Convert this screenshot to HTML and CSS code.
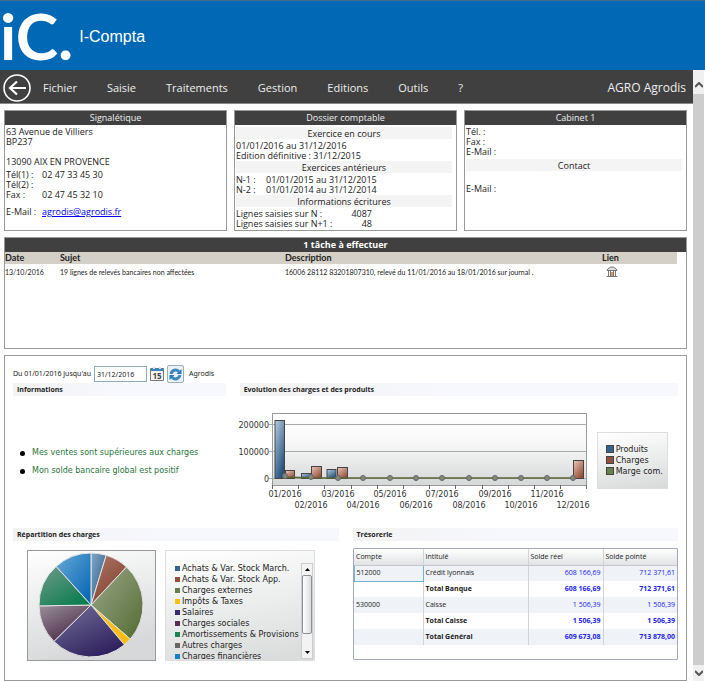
FILE: index.html
```html
<!DOCTYPE html>
<html lang="fr">
<head>
	<meta charset="utf-8">
	<title>I-Compta</title>
	<link rel="stylesheet" href="styles.css">
</head>
<body>
	<header class="banner">
		<span class="logo">iC.</span>
		<h1>I-Compta</h1>
	</header>
	<div class="page">
		<div class="content">
			<nav class="menu">
				<button class="back" aria-label="Retour">
					<svg width="28" height="28" viewBox="0 0 28 28" fill="none" stroke="#fff">
						<circle cx="14" cy="14" r="13" stroke-width="1.6"/>
						<path d="M23 14H7M14 7.5L7 14l7 6.5" stroke-width="2.2"/>
					</svg>
				</button>
				<a href="#">Fichier</a>
				<a href="#">Saisie</a>
				<a href="#">Traitements</a>
				<a href="#">Gestion</a>
				<a href="#">Editions</a>
				<a href="#">Outils</a>
				<a href="#">?</a>
				<span class="company">AGRO Agrodis</span>
			</nav>

			<main>
				<div class="cards">
					<section class="card">
						<h2>Signalétique</h2>
						<div class="card-body">
							<p>63 Avenue de Villiers<br>BP237<br><br>13090 AIX EN PROVENCE</p>
							<dl class="tel">
								<dt>Tél(1) :</dt><dd>02 47 33 45 30</dd>
								<dt>Tél(2) :</dt><dd></dd>
								<dt>Fax :</dt><dd>02 47 45 32 10</dd>
							</dl>
							<dl class="tel mail">
								<dt>E-Mail :</dt><dd><a href="mailto:agrodis@agrodis.fr">agrodis@agrodis.fr</a></dd>
							</dl>
						</div>
					</section>

					<section class="card">
						<h2>Dossier comptable</h2>
						<div class="card-body">
							<h3>Exercice en cours</h3>
							<p>01/01/2016 au 31/12/2016<br>Edition définitive : 31/12/2015</p>
							<h3>Exercices antérieurs</h3>
							<dl class="years">
								<dt>N-1 :</dt><dd>01/01/2015 au 31/12/2015</dd>
								<dt>N-2 :</dt><dd>01/01/2014 au 31/12/2014</dd>
							</dl>
							<h3>Informations écritures</h3>
							<dl class="lines">
								<dt>Lignes saisies sur N :</dt><dd>4087</dd>
								<dt>Lignes saisies sur N+1 :</dt><dd>48</dd>
							</dl>
						</div>
					</section>

					<section class="card">
						<h2>Cabinet 1</h2>
						<div class="card-body">
							<p>Tél. :<br>Fax :<br>E-Mail :</p>
							<h3 class="contact">Contact</h3>
							<p>E-Mail :</p>
						</div>
					</section>
				</div>

				<section class="card tasks">
					<h2>1 tâche à effectuer</h2>
					<table>
						<thead>
							<tr>
								<th class="c-date">Date</th>
								<th class="c-subject">Sujet</th>
								<th class="c-desc">Description</th>
								<th>Lien</th>
							</tr>
						</thead>
						<tbody>
							<tr>
								<td>13/10/2016</td>
								<td>19 lignes de relevés bancaires non affectées</td>
								<td>16006 28112 83201807310, relevé du 11/01/2016 au 18/01/2016 sur journal .</td>
								<td>
									<a href="#" class="bank" aria-label="Banque">
										<svg width="12" height="12" viewBox="0 0 12 12" fill="none" stroke="#777">
											<path d="M1 4.5C2 2 4 1 6 1s4 1 5 3.500zM2.500 5v5M4.500 5v5M7.500 5v5M9.500 5v5M0.500 10.500h11" fill="#ddd"/>
											<path d="M6 6v4" stroke="#d99a55" stroke-width="2"/>
										</svg>
									</a>
								</td>
							</tr>
						</tbody>
					</table>
				</section>

				<section class="dashboard">
					<form class="period">
						<label for="until">Du 01/01/2016 jusqu'au</label>
						<input type="text" id="until" value="31/12/2016">
						<button type="button" class="calendar" aria-label="Calendrier">
							<svg width="14" height="14" viewBox="0 0 14 14">
								<path d="M.5 1.500h13v12H.5z" fill="#f4f4f4" stroke="#777"/>
								<path d="M1 1h12v3H1z" fill="#3c86b8"/>
								<path d="M3 0h2v2H3zM9 0h2v2H9z" fill="#ddd"/>
								<text x="7" y="12" text-anchor="middle">15</text>
							</svg>
						</button>
						<button type="button" class="refresh" aria-label="Actualiser">
							<svg width="13" height="13" viewBox="0 0 13 13" fill="none" stroke="#3c88c2" stroke-width="3">
								<path d="M2 6C3 2 7 1 10 3.500M11 7c-1 4-5 5-8 2.500"/>
								<path d="M12.500 1v5h-5zM.5 12V7h5z" fill="#2c79b8" stroke="none"/>
							</svg>
						</button>
						<span>Agrodis</span>
					</form>

					<div class="row top">
						<section>
							<h3>Informations</h3>
							<ul class="infos">
								<li>Mes ventes sont supérieures aux charges</li>
								<li>Mon solde bancaire global est positif</li>
							</ul>
						</section>
						<section>
							<h3>Evolution des charges et des produits</h3>
							<div class="evolution">
								<svg class="chart" width="360" height="104" viewBox="-4 0 360 104">
									<defs>
										<linearGradient id="plot" x2="0" y2="1"><stop stop-color="#fff"/><stop offset=".4" stop-color="#f8f8f8"/><stop offset="1" stop-color="#d5d8d8"/></linearGradient>
										<linearGradient id="blue" x2=".6" y2="1"><stop stop-color="#b5cde0"/><stop offset="1" stop-color="#24527c"/></linearGradient>
										<linearGradient id="red" x2=".7" y2="1"><stop stop-color="#eac8ba"/><stop offset="1" stop-color="#954b35"/></linearGradient>
									</defs>
									<rect x="32.500" y="5.500" width="314" height="72" fill="url(#plot)" stroke="#999"/>
									<path d="M29 16.500h318M29 43.500h318M29 70.500h318" stroke="#aaa"/>
									<path d="M32.500 77v4M58.500 77v4M84.500 77v4M111.500 77v4M137.500 77v4M163.500 77v4M189.500 77v4M215.500 77v4M242.500 77v4M268.500 77v4M294.500 77v4M320.500 77v4M346.500 77v4" stroke="#666"/>
									<g fill="url(#blue)" stroke="#444">
										<rect x="35" y="12.500" width="9.500" height="58"/>
										<rect x="61.500" y="65.500" width="9" height="5"/>
										<rect x="87" y="61.500" width="9" height="9"/>
									</g>
									<g fill="url(#red)" stroke="#444">
										<rect x="45.500" y="62.500" width="9" height="8"/>
										<rect x="71.500" y="58.500" width="10" height="12"/>
										<rect x="97.500" y="59.500" width="10" height="11"/>
										<rect x="333.500" y="52.500" width="10" height="18"/>
									</g>
									<path d="M46 69l26 1h262" fill="none" stroke="#5a6436" stroke-width="1.500"/>
									<g fill="#858878" stroke="#666">
										<circle cx="45" cy="68" r="2.500"/><circle cx="71" cy="69" r="2.500"/><circle cx="98" cy="70" r="2.500"/><circle cx="123" cy="70" r="2.500"/><circle cx="150" cy="70" r="2.500"/><circle cx="176" cy="70" r="2.500"/>
										<circle cx="202" cy="70" r="2.500"/><circle cx="229" cy="70" r="2.500"/><circle cx="255" cy="70" r="2.500"/><circle cx="281" cy="70" r="2.500"/><circle cx="307" cy="70" r="2.500"/><circle cx="333" cy="70" r="2.500"/>
									</g>
									<g text-anchor="end">
										<text x="29" y="20">200000</text><text x="29" y="47">100000</text><text x="29" y="74">0</text>
									</g>
									<g text-anchor="middle">
										<text x="45" y="89">01/2016</text><text x="98" y="89">03/2016</text><text x="150" y="89">05/2016</text><text x="202" y="89">07/2016</text><text x="255" y="89">09/2016</text><text x="307" y="89">11/2016</text>
										<text x="71" y="100">02/2016</text><text x="123" y="100">04/2016</text><text x="176" y="100">06/2016</text><text x="229" y="100">08/2016</text><text x="281" y="100">10/2016</text><text x="333" y="100">12/2016</text>
									</g>
								</svg>
								<ul class="legend">
									<li class="navy">Produits</li>
									<li class="brown">Charges</li>
									<li class="olive">Marge com.</li>
								</ul>
							</div>
						</section>
					</div>

					<div class="row bottom">
						<section>
							<h3>Répartition des charges</h3>
							<div class="split">
								<svg class="pie" width="129" height="111" viewBox="0 0 129 111">
									<defs>
										<linearGradient id="back" x2=".3" y2="1"><stop stop-color="#fff"/><stop offset="1" stop-color="#d6d8d9"/></linearGradient>
										<linearGradient id="p1" x2="1" y2="1"><stop stop-color="#82aacc"/><stop offset="1" stop-color="#254f78"/></linearGradient>
										<linearGradient id="p2" x2=".6" y2="1"><stop stop-color="#ad7868"/><stop offset="1" stop-color="#84402e"/></linearGradient>
										<linearGradient id="p3" x2="1" y2="1"><stop stop-color="#9ca88b"/><stop offset="1" stop-color="#536b32"/></linearGradient>
										<linearGradient id="p5" x2=".6" y2="1"><stop stop-color="#74729a"/><stop offset="1" stop-color="#30225f"/></linearGradient>
										<linearGradient id="p6" x2=".7" y2="1"><stop stop-color="#9b929b"/><stop offset="1" stop-color="#462344"/></linearGradient>
										<linearGradient id="p7" x2=".8" y2="1"><stop stop-color="#719a8b"/><stop offset="1" stop-color="#087c4d"/></linearGradient>
										<linearGradient id="p8" x2="1" y2="1"><stop stop-color="#67a9d8"/><stop offset="1" stop-color="#0062b0"/></linearGradient>
									</defs>
									<rect x=".5" y=".5" width="128" height="110" fill="url(#back)" stroke="#999"/>
									<g stroke="#e4e4e4">
										<path d="M64 55V3A52 52 0 0 1 79.200 5.300z" fill="url(#p1)"/>
										<path d="M64 55L79.200 5.300A52 52 0 0 1 99.500 17z" fill="url(#p2)"/>
										<path d="M64 55L99.500 17A52 52 0 0 1 103.300 89.100z" fill="url(#p3)"/>
										<path d="M64 55L103.300 89.100A52 52 0 0 1 97.400 94.800z" fill="#fcbd16"/>
										<path d="M64 55L97.400 94.800A52 52 0 0 1 26.900 91.400z" fill="url(#p5)"/>
										<path d="M64 55L26.900 91.400A52 52 0 0 1 12 55.900z" fill="url(#p6)"/>
										<path d="M64 55L12 55.900A52 52 0 0 1 29.200 16.400z" fill="url(#p7)"/>
										<path d="M64 55L29.200 16.400A52 52 0 0 1 64 3z" fill="url(#p8)"/>
									</g>
								</svg>
								<div class="legend-box">
									<ul class="legend">
										<li class="navy">Achats &amp; Var. Stock March.</li>
										<li class="brown">Achats &amp; Var. Stock App.</li>
										<li class="olive">Charges externes</li>
										<li class="yellow">Impôts &amp; Taxes</li>
										<li class="purple">Salaires</li>
										<li class="plum">Charges sociales</li>
										<li class="green">Amortissements &amp; Provisions</li>
										<li class="grey">Autres charges</li>
										<li class="blue">Charges financières</li>
									</ul>
									<div class="mini-scroll">
										<button aria-label="Monter"><svg width="5" height="3" viewBox="0 0 5 3"><path d="M0 3L2.500 0 5 3z"/></svg></button>
										<div class="mini-thumb"></div>
										<button aria-label="Descendre"><svg width="5" height="3" viewBox="0 0 5 3"><path d="M0 0h5L2.500 3z"/></svg></button>
									</div>
								</div>
							</div>
						</section>
						<section>
							<h3>Trésorerie</h3>
							<div class="treasury">
								<table>
									<thead>
										<tr><th class="c-account">Compte</th><th class="c-title">Intitulé</th><th class="c-real">Solde réel</th><th>Solde pointé</th></tr>
									</thead>
									<tbody>
										<tr><td class="selected">512000</td><td>Crédit lyonnais</td><td>608 166,69</td><td>712 371,61</td></tr>
										<tr class="total"><td></td><td>Total Banque</td><td>608 166,69</td><td>712 371,61</td></tr>
										<tr><td>530000</td><td>Caisse</td><td>1 506,39</td><td>1 506,39</td></tr>
										<tr class="total"><td></td><td>Total Caisse</td><td>1 506,39</td><td>1 506,39</td></tr>
										<tr class="total"><td></td><td>Total Général</td><td>609 673,08</td><td>713 878,00</td></tr>
									</tbody>
								</table>
							</div>
						</section>
					</div>
				</section>
			</main>
		</div>

		<div class="scrollbar">
			<button aria-label="Haut"><svg width="8" height="6" viewBox="0 0 8 6"><path d="M0 5l4-4 4 4" fill="none" stroke="#555" stroke-width="2"/></svg></button>
			<div class="thumb"></div>
			<button aria-label="Bas"><svg width="8" height="6" viewBox="0 0 8 6"><path d="M0 1l4 4 4-4" fill="none" stroke="#555" stroke-width="2"/></svg></button>
		</div>
	</div>
</body>
</html>
```
FILE: styles.css
```css
*{
	box-sizing: border-box;
}
body{
	margin: 0;
	min-height: 100vh;
	display: flex;
	flex-direction: column;
	background: #fff;
	color: #222;
	font-family: "Open Sans", "Noto Sans", sans-serif;
	font-size: 9px;
	line-height: 10px;
}
h1,h2,h3,p,ul,dl,dd{
	margin: 0;
	padding: 0;
	font-weight: normal;
}
button{
	padding: 0;
	border: none;
	background: none;
	display: flex;
	align-items: center;
	justify-content: center;
}
svg{
	display: block;
}
table{
	border-collapse: collapse;
	table-layout: fixed;
	width: 100%;
}
th,td{
	padding: 0;
	text-align: left;
}

/* banner and menu */
.banner{
	height: 70px;
	display: flex;
	align-items: center;
	gap: 6px;
	background: #0068b4;
	border-top: 1px solid #446b8c;
	color: #fff;
}
.logo{
	font: bold 64px/69px Lato, sans-serif;
}
.banner h1{
	padding-top: 2px;
	font: 16px/20px "Liberation Sans", sans-serif;
}
.page{
	flex: 1;
	display: flex;
}
.content{
	flex: 1;
	min-width: 0;
	display: flex;
	flex-direction: column;
}
.menu{
	height: 34px;
	display: flex;
	align-items: center;
	gap: 30px;
	padding: 2px 7px 0 3px;
	background: #404040;
	border-bottom: 1px solid #888;
	font-size: 11px;
}
.menu a{
	color: #eee;
	text-decoration: none;
}
.back{
	margin-right: -18px;
}
.company{
	margin-left: auto;
	color: #eee;
	font-size: 12px;
}
main{
	flex: 1;
	display: flex;
	flex-direction: column;
	gap: 6px;
	padding: 6px 6px 0 4px;
}

/* cards */
.cards{
	display: grid;
	grid-template-columns: repeat(3, 1fr);
	gap: 7px;
}
.card{
	min-height: 121px;
	border: 1px solid #999;
}
.card h2{
	height: 14px;
	background: #404040;
	color: #eee;
	font-size: 9px;
	line-height: 14px;
	text-align: center;
}
.card-body{
	padding: 2px 4px 0 1px;
}
.card-body h3{
	height: 12px;
	background: #f4f4f4;
	font-size: 9px;
	line-height: 14px;
	text-align: center;
	margin-bottom: 2px;
}
.card-body dl{
	display: grid;
	grid-auto-rows: 10px;
	white-space: nowrap;
}
.tel{
	grid-template-columns: 36px 1fr;
	margin-top: 3px;
}
.mail{
	padding-top: 4px;
}
.tel a{
	color: #0000ee;
}
.years{
	grid-template-columns: 30px 1fr;
}
.lines{
	grid-template-columns: 102px 34px;
}
.lines dd{
	text-align: right;
}
.card-body .contact{
	margin: 2px 0 13px;
}

/* tasks */
.tasks{
	min-height: 112px;
}
.tasks h2{
	font-weight: bold;
	color: #fff;
}
.tasks table{
	width: calc(100% - 9px);
	font-family: Lato, "Open Sans", sans-serif;
}
.tasks th{
	height: 12px;
	background: #d4d0c8;
	font-size: 9px;
	line-height: 12px;
}
.tasks td{
	height: 16px;
	font-size: 7px;
	white-space: nowrap;
}
.c-date{
	width: 55px;
}
.c-subject{
	width: 225px;
}
.c-desc{
	width: 317px;
}
.bank{
	display: block;
	padding-left: 4px;
}

/* dashboard */
.dashboard{
	flex: 1;
	padding: 9px 8px 8px;
	border: 1px solid #999;
}
.period{
	height: 18px;
	display: flex;
	align-items: center;
	gap: 3px;
	font-family: "Noto Sans", sans-serif;
	font-size: 7px;
}
.period input{
	width: 53px;
	height: 16px;
	padding: 0 2px;
	border: 1px solid #8fa9bd;
	font: 7px "Noto Sans", sans-serif;
	color: #222;
}
.calendar text{
	font: bold 8px "Open Sans", sans-serif;
	fill: #444;
}
.refresh{
	width: 17px;
	height: 18px;
	margin-right: 2px;
	border: 1px solid #9aaebb;
	border-radius: 2px;
	background: #edf2f6;
}
.row{
	display: grid;
	gap: 14px;
}
.top{
	grid-template-columns: 213fr 439fr;
	min-height: 145px;
}
.bottom{
	grid-template-columns: 1fr 1fr;
}
.dashboard h3{
	height: 13px;
	padding-left: 4px;
	background: linear-gradient(to right, #f3f3f3, #f7f8fe 50%);
	font-size: 7px;
	line-height: 13px;
	font-weight: bold;
}
.infos{
	padding: 52px 0 0 7px;
	list-style: none;
	font: 8px/10px "DejaVu Sans", sans-serif;
	color: #28753a;
}
.infos li{
	display: flex;
	align-items: center;
	gap: 7px;
	margin-bottom: 8px;
	white-space: nowrap;
}
.infos li::before{
	content: "";
	width: 5px;
	height: 5px;
	border-radius: 50%;
	background: #000;
}
.evolution{
	display: flex;
	align-items: center;
	gap: 1px;
	margin-left: -4px;
	padding-top: 12px;
}
.chart text{
	font: 8px "DejaVu Sans", sans-serif;
	fill: #333;
}
.legend{
	list-style: none;
	font: 8px/11px "DejaVu Sans", sans-serif;
}
.legend li{
	display: flex;
	align-items: center;
	gap: 2px;
	white-space: nowrap;
}
.legend li::before{
	content: "";
	flex: none;
	width: 5px;
	height: 5px;
}
.evolution .legend{
	width: 71px;
	padding: 11px 8px;
	border: 1px solid #ddd;
	background: linear-gradient(170deg, #fff, #d8dada);
}
.evolution .legend li::before{
	border: 1px solid #444;
	width: 6px;
	height: 6px;
}
.navy::before{
	background: #32658f;
}
.brown::before{
	background: #93503e;
}
.olive::before{
	background: #68814b;
}
.yellow::before{
	background: #fcbd16;
}
.purple::before{
	background: #3b2c72;
}
.plum::before{
	background: #562f55;
}
.green::before{
	background: #198557;
}
.grey::before{
	background: #666;
}
.blue::before{
	background: #1680c8;
}
.split{
	display: flex;
	gap: 9px;
	padding: 9px 0 0 14px;
}
.legend-box{
	width: 150px;
	height: 111px;
	display: flex;
	justify-content: space-between;
	padding: 12px 1px 1px 9px;
	border: 1px solid #ddd;
	background: linear-gradient(170deg, #fff, #d8dada);
}
.legend-box .legend{
	height: 96px;
	overflow: hidden;
}
.mini-scroll{
	width: 12px;
	display: flex;
	flex-direction: column;
	border: 1px solid #ccc;
	background: #f3f3f3;
}
.mini-scroll button{
	height: 11px;
}
.mini-thumb{
	height: 59px;
	margin-bottom: auto;
	border: 1px solid #8a9098;
	border-radius: 2px;
	background: linear-gradient(to right, #fff, #ddd);
}
.treasury{
	height: 112px;
	margin-top: 7px;
	border: 1px solid #a4a8bd;
	border-radius: 1px;
}
.treasury th,.treasury td{
	height: 16px;
	padding: 0 2px;
	border-right: 1px solid #d0d4d8;
	font-size: 7px;
}
.treasury th{
	background: linear-gradient(#fff, #e0e2e4);
	border-bottom: 1px solid #c4c8cc;
	font-weight: normal;
}
.treasury th:last-child,.treasury td:last-child{
	border-right: none;
}
.treasury tbody tr:nth-child(odd){
	background: #eff3f8;
}
.treasury td:nth-child(n+3){
	text-align: right;
	color: #2222ee;
}
.total{
	font-weight: bold;
}
.treasury .selected{
	border: 1px solid #6fb5cf;
}
.c-account{
	width: 69px;
}
.c-title{
	width: 105px;
}
.c-real{
	width: 75px;
}

/* window scrollbar */
.scrollbar{
	width: 12px;
	display: flex;
	flex-direction: column;
	border-right: 1px solid #fff;
	background: #f0f0f0;
}
.scrollbar button{
	height: 16px;
}
.scrollbar button:first-child{
	height: 24px;
	padding-top: 6px;
}
.thumb{
	flex: 1;
	background: #cdcdcd;
}
```
